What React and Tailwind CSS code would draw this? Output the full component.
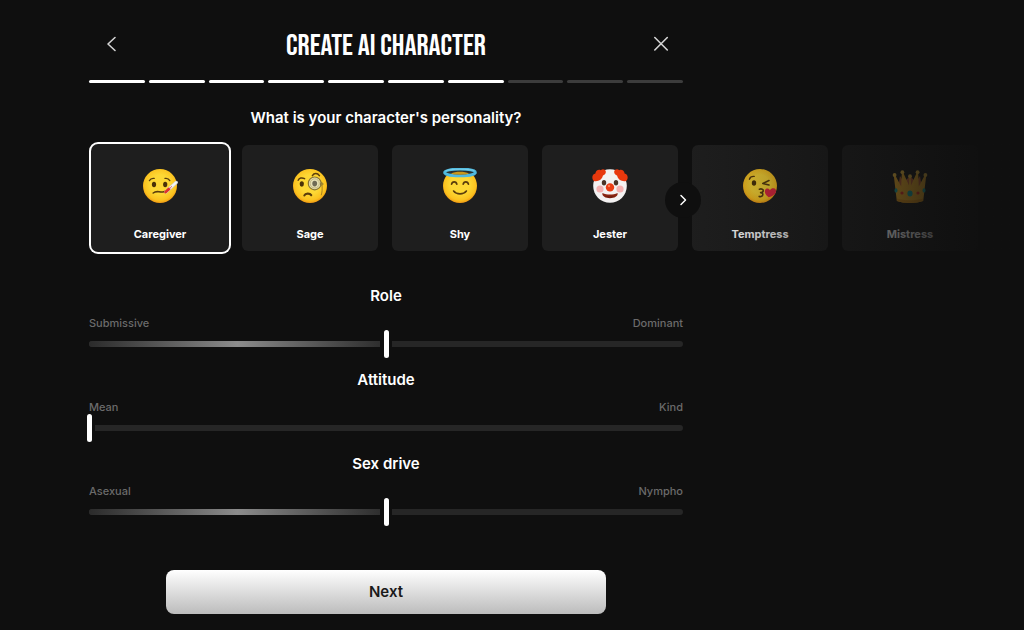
import React, { useState } from 'react';
import { clsx } from 'clsx';

const TOTAL_STEPS = 10;
const CURRENT_STEP = 7;

function FaceBase({ id }) {
  return (
    <>
      <defs>
        <radialGradient id={id} cx="0.5" cy="0.45" r="0.55">
          <stop offset="0.5" stopColor="#fdd835" />
          <stop offset="0.85" stopColor="#fbc21f" />
          <stop offset="1" stopColor="#f09a14" />
        </radialGradient>
      </defs>
      <circle cx="18" cy="18" r="17" fill={`url(#${id})`} />
    </>
  );
}

function CaregiverIcon() {
  return (
    <svg viewBox="0 0 36 36" className="size-9" aria-hidden="true">
      <FaceBase id="face-caregiver" />
      <ellipse cx="12" cy="16.5" rx="2.1" ry="2.8" fill="#4a3208" />
      <ellipse cx="23.2" cy="16.5" rx="2.1" ry="2.8" fill="#4a3208" />
      <path d="M7.4 12.6c1-1.8 2.8-2.6 4.8-2.2M23 10.4c2-.4 3.8.4 4.8 2.2" fill="none" stroke="#5a3d0c" strokeWidth="1.3" strokeLinecap="round" />
      <path d="M11.2 25c2.2-1.8 4-1.6 6-1.2s3.5.2 5.6-.4" fill="none" stroke="#5a3d0c" strokeWidth="1.6" strokeLinecap="round" />
      <path d="M24 23.8l10.2-9.3" stroke="#cfd6da" strokeWidth="3.4" strokeLinecap="round" />
      <path d="M26 22l8-7.4" stroke="#f5f5f5" strokeWidth="2" strokeLinecap="round" />
      <path d="M23.6 24l3.4-3.1" stroke="#e0322b" strokeWidth="2.8" strokeLinecap="round" />
      <path d="M27 20.9l3-2.7" stroke="#e0564f" strokeWidth="0.8" />
    </svg>
  );
}

function SageIcon() {
  return (
    <svg viewBox="0 0 36 36" className="size-9" aria-hidden="true">
      <FaceBase id="face-sage" />
      <ellipse cx="9.8" cy="16" rx="2.1" ry="2.7" fill="#4a3208" />
      <path d="M6.2 12.2c1-2.2 3.6-3 6.4-1.6" fill="none" stroke="#5a3d0c" strokeWidth="1.5" strokeLinecap="round" />
      <path d="M20.4 7.6c1.6-2.6 5-2.8 7 0" fill="none" stroke="#5a3d0c" strokeWidth="1.5" strokeLinecap="round" />
      <circle cx="22.7" cy="15.4" r="6.4" fill="#e6dfb4" stroke="#8b7630" strokeWidth="1.2" />
      <circle cx="22.7" cy="15.4" r="4.6" fill="none" stroke="#b7ab72" strokeWidth="0.8" />
      <ellipse cx="22.7" cy="15.6" rx="2.4" ry="2.8" fill="#6f6a55" />
      <circle cx="29.8" cy="16" r="1.2" fill="none" stroke="#7d6a2c" strokeWidth="0.9" />
      <path d="M30 17.3c.3 4 .2 7-.8 10" fill="none" stroke="#a87f1c" strokeWidth="1" />
      <path d="M12.4 27.4c1-2.2 5.4-2.4 6.8-.2" fill="none" stroke="#5a3d0c" strokeWidth="2.2" strokeLinecap="round" />
    </svg>
  );
}

function ShyIcon() {
  return (
    <svg viewBox="0 0 36 36" className="size-9" aria-hidden="true">
      <FaceBase id="face-shy" />
      <ellipse cx="18" cy="4.4" rx="15.4" ry="3.4" fill="#2b2f2c" stroke="#4fb9de" strokeWidth="2.8" />
      <path d="M9 5.8c4-2.6 14-2.6 18 0-5 1.2-13 1.2-18 0z" fill="#c9981a" />
      <path d="M3.6 3c3-2.4 25.8-2.4 28.8 0" fill="none" stroke="#8bd8ef" strokeWidth="0.7" />
      <path d="M9.6 16.2c.6-3.2 4.6-3.2 5.2 0M21.2 16.2c.6-3.2 4.6-3.2 5.2 0" fill="none" stroke="#5a3d0c" strokeWidth="1.7" strokeLinecap="round" />
      <path d="M11.6 23c3 3.8 9.8 3.8 12.8 0" fill="none" stroke="#5a3d0c" strokeWidth="1.6" strokeLinecap="round" />
    </svg>
  );
}

function JesterIcon() {
  return (
    <svg viewBox="0 0 36 36" className="size-9" aria-hidden="true">
      <circle cx="18" cy="18" r="16.8" fill="#f3f1f1" />
      <path d="M1 12C-.6 9 .8 6 3.4 5.6 3.6 2.6 6.4 1 8.8 2.2c1.6-1.6 4.6-1 5 1.2.4 2.4-1.4 3.4-2.8 4.2-.8 3.6-3.6 5.6-6.2 5.4C3.4 13.6 1.8 13.4 1 12z" fill="#e8380d" />
      <path d="M35 12c1.6-3 .2-6-2.4-6.4C32.4 2.6 29.6 1 27.2 2.2c-1.6-1.6-4.6-1-5 1.2-.4 2.4 1.4 3.4 2.8 4.2.8 3.6 3.6 5.6 6.2 5.4 1.4.6 3 .4 3.8-1z" fill="#e8380d" />
      <circle cx="8" cy="21" r="3.6" fill="#f4b0b0" />
      <circle cx="28" cy="21" r="3.6" fill="#f4b0b0" />
      <ellipse cx="12" cy="14.8" rx="2.2" ry="2.7" fill="#4c3327" />
      <ellipse cx="24" cy="14.8" rx="2.2" ry="2.7" fill="#4c3327" />
      <path d="M10.4 25c4.6 2 10.6 2 15.2 0 .6 3.2-3.2 5.2-7.6 5.2S9.8 28.2 10.4 25z" fill="#8a2512" />
      <path d="M12.6 27.8c3 1.2 7.8 1.2 10.8 0-2.8 2.4-8 2.4-10.8 0z" fill="#5c190e" />
      <circle cx="18" cy="19.4" r="4.2" fill="#ec3c14" />
      <circle cx="17" cy="18" r="1.2" fill="#ff7a50" />
    </svg>
  );
}

function TemptressIcon() {
  return (
    <svg viewBox="0 0 36 36" className="size-9" aria-hidden="true">
      <FaceBase id="face-temptress" />
      <ellipse cx="12" cy="15" rx="2.2" ry="2.8" fill="#4a3208" />
      <path d="M7.4 11.2c.6-1.8 2.4-3 4.8-2.8" fill="none" stroke="#5a3d0c" strokeWidth="1.4" strokeLinecap="round" />
      <path d="M27 12.6l-6.2 2.8 6.2 1.6" fill="none" stroke="#5a3d0c" strokeWidth="1.6" strokeLinecap="round" strokeLinejoin="round" />
      <path d="M17.4 21.2c2.2-.8 4.2.2 3.8 1.8-.2 1.2-1.6 1.6-2.6 1.6 1.4.2 2.4.8 2.2 2-.2 1.6-1.8 2.4-3.6 1.8" fill="none" stroke="#5a3d0c" strokeWidth="1.6" strokeLinecap="round" strokeLinejoin="round" />
      <path d="M26.6 29.2c-3-2.2-4.6-5-3.4-7.4 1-2 3.6-1.9 4.8.4 1.4-2.4 4.6-2.4 5.8-.4 1.3 2.5-1.6 6.4-7.2 7.4z" fill="#e2273f" />
    </svg>
  );
}

function MistressIcon() {
  return (
    <svg viewBox="0 0 36 36" className="size-9" aria-hidden="true">
      <path d="M6 20l2-12 4 6 6-6 6 6 4-6 2 12z" fill="#d06a3c" />
      <path d="M4.8 33L1.8 7.8 3.4 7.4 9.2 18.4 9.8 5h1.6l5.6 12.4.4-8.4h1.2l.4 8.4L24.6 5h1.6l.6 13.4 5.8-11 1.6.4L31.2 33c-6 2.6-20.4 2.6-26.4 0z" fill="#fdb92b" />
      <path d="M5 30.4c7 2.4 19 2.4 26 0l-.2 2.6c-6 2.6-19.6 2.6-25.6 0z" fill="#e79a1a" />
      <circle cx="2.6" cy="7" r="1.9" fill="#ffca44" />
      <circle cx="10.4" cy="4.2" r="1.9" fill="#ffca44" />
      <circle cx="18" cy="8.2" r="1.9" fill="#ffca44" />
      <circle cx="25.6" cy="4.2" r="1.9" fill="#ffca44" />
      <circle cx="33.4" cy="7" r="1.9" fill="#ffca44" />
      <ellipse cx="18" cy="25.4" rx="2.6" ry="3" fill="#19b0aa" />
      <circle cx="10" cy="25" r="1.6" fill="#f0382b" />
      <circle cx="26" cy="25" r="1.6" fill="#f0382b" />
      <ellipse cx="4" cy="22.4" rx="1.5" ry="2.2" fill="#19b0aa" />
      <ellipse cx="32" cy="22.4" rx="1.5" ry="2.2" fill="#19b0aa" />
    </svg>
  );
}

const personalities = [
  { id: 'caregiver', label: 'Caregiver', icon: CaregiverIcon },
  { id: 'sage', label: 'Sage', icon: SageIcon },
  { id: 'shy', label: 'Shy', icon: ShyIcon },
  { id: 'jester', label: 'Jester', icon: JesterIcon },
  { id: 'temptress', label: 'Temptress', icon: TemptressIcon },
  { id: 'mistress', label: 'Mistress', icon: MistressIcon }
];

const traits = [
  { id: 'role', label: 'Role', low: 'Submissive', high: 'Dominant', initial: 50 },
  { id: 'attitude', label: 'Attitude', low: 'Mean', high: 'Kind', initial: 0 },
  { id: 'sex-drive', label: 'Sex drive', low: 'Asexual', high: 'Nympho', initial: 50 }
];

function Header() {
  return (
    <header className="flex items-center justify-between">
      <button type="button" aria-label="Back" className="flex size-11 items-center justify-center text-neutral-300">
        <svg viewBox="0 0 16 16" className="size-4" fill="none" stroke="currentColor" strokeWidth="1.6" strokeLinecap="round" strokeLinejoin="round">
          <path d="M12 1.5L5 8l7 6.5" />
        </svg>
      </button>
      <h1 className="pt-1 font-['Bebas_Neue','Liberation_Sans_Narrow',sans-serif] text-[30px] leading-8 font-normal text-white uppercase">
        Create AI Character
      </h1>
      <button type="button" aria-label="Close" className="flex size-11 items-center justify-center text-neutral-300">
        <svg viewBox="0 0 16 16" className="size-4" fill="none" stroke="currentColor" strokeWidth="1.6" strokeLinecap="round">
          <path d="M1.8 1.5l12.5 12.5M14.3 1.5L1.8 14" />
        </svg>
      </button>
    </header>
  );
}

function Progress() {
  return (
    <div
      role="progressbar"
      aria-label="Progress"
      aria-valuemin={0}
      aria-valuemax={TOTAL_STEPS}
      aria-valuenow={CURRENT_STEP}
      className="mt-3.5 flex gap-1"
    >
      {Array.from({ length: TOTAL_STEPS }, (_, i) => (
        <span key={i} className={clsx('h-[3px] flex-1 rounded-full', i < CURRENT_STEP ? 'bg-white' : 'bg-[#3c3c3c]')} />
      ))}
    </div>
  );
}

function PersonalityPicker() {
  const [selected, setSelected] = useState('caregiver');

  return (
    <div className="relative mt-3.5">
      <ul className="flex gap-3.5 px-[3px] pt-[3px] pb-[7px]">
        {personalities.map((item) => {
          const Icon = item.icon;
          return (
            <li key={item.id} className="shrink-0">
              <button
                type="button"
                aria-pressed={selected === item.id}
                onClick={() => setSelected(item.id)}
                className={clsx(
                  'flex w-[136px] flex-col items-center gap-[22px] rounded-md bg-[#1e1e1e] pt-[23px] pb-[9px]',
                  selected === item.id && 'shadow-[0_0_0_1px_#1e1e1e,0_0_0_3px_#fff]'
                )}
              >
                <Icon />
                <span className="text-[11px] leading-4 font-bold text-white">{item.label}</span>
              </button>
            </li>
          );
        })}
      </ul>
      {/* fades the cards that run past the form column */}
      <div className="pointer-events-none absolute inset-y-0 left-full w-screen bg-linear-to-r from-[#0f0f0f]/0 to-[#0f0f0f] to-[310px]" />
      <button
        type="button"
        aria-label="More personalities"
        className="absolute top-1/2 left-full flex size-9 -translate-x-1/2 -translate-y-1/2 items-center justify-center rounded-full bg-[#0f0f0f] text-white"
      >
        <svg viewBox="0 0 16 16" className="size-4" fill="none" stroke="currentColor" strokeWidth="1.5" strokeLinecap="round" strokeLinejoin="round">
          <path d="M6 3.5l4.5 4.5L6 12.5" />
        </svg>
      </button>
    </div>
  );
}

function TraitSlider({ trait }) {
  const [value, setValue] = useState(trait.initial);

  return (
    <div>
      <label htmlFor={trait.id} className="block text-center text-[15px] leading-5 font-semibold text-white">
        {trait.label}
      </label>
      <div className="mt-[9px] flex justify-between text-[11px] leading-4 font-medium text-[#6b6b6b]">
        <span>{trait.low}</span>
        <span>{trait.high}</span>
      </div>
      <div className="relative mt-2.5 h-1.5 rounded-full bg-[#262626]">
        <div
          className="h-full rounded-full bg-linear-to-r from-[#2b2b2b] via-[#8c8c8c] to-[#2b2b2b]"
          style={{ width: `${value}%` }}
        />
        <div
          className="absolute top-0 flex h-full w-3 -translate-x-1/2 items-center justify-center bg-[#0f0f0f]"
          style={{ left: `${value}%` }}
        >
          <span className="h-7 w-[5px] shrink-0 rounded-sm bg-white" />
        </div>
        <input
          id={trait.id}
          type="range"
          min="0"
          max="100"
          value={value}
          onChange={(e) => setValue(Number(e.target.value))}
          className="absolute inset-x-0 top-1/2 h-7 w-full -translate-y-1/2 cursor-pointer opacity-0"
        />
      </div>
    </div>
  );
}

export default function App() {
  return (
    <div className="min-h-screen overflow-x-hidden bg-[#0f0f0f] px-[89px] pt-[22px] pb-4 font-[Inter,'Liberation_Sans',sans-serif]">
      <main className="max-w-[594px]">
        <Header />
        <Progress />
        <h2 className="mt-[25px] text-center text-[15px] leading-5 font-semibold text-white">
          What is your character's personality?
        </h2>
        <PersonalityPicker />
        <div className="mt-7 flex flex-col gap-[23px]">
          {traits.map((trait) => (
            <TraitSlider key={trait.id} trait={trait} />
          ))}
        </div>
        <button
          type="button"
          className="mx-auto mt-[55px] block h-11 w-full max-w-[440px] rounded-lg bg-linear-to-b from-white to-[#bcbcbc] text-[15px] leading-5 font-semibold text-[#1a1a1a]"
        >
          Next
        </button>
      </main>
    </div>
  );
}
